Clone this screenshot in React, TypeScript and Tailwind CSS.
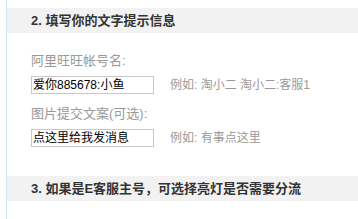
export default function App() {
  const font = { fontFamily: '"Liberation Sans", "Noto Sans CJK SC", sans-serif' }
  return (
    <div className="w-[358px] h-[219px] bg-white overflow-hidden" style={font}>
      <div className="ml-[6px] h-full border-l border-[#d4e3fb] pt-[8px]">
        <div className="h-[25px] bg-[#f2f2f2] pl-[24px] flex items-center text-[13px] font-bold text-[#333]">
          2. 填写你的文字提示信息
        </div>
        <div className="pl-[24px] pt-[18px] text-[13px] text-[#999]">
          <div className="h-[20px] leading-[20px]">阿里旺旺帐号名:</div>
          <div className="flex items-center mt-[5px] h-[18px]">
            <input
              readOnly
              value="爱你885678:小鱼"
              className="w-[123px] h-[18px] border border-[#c8c8c8] px-[1px] text-[12px] text-black outline-none"
              style={font}
            />
            <span className="ml-[16px] text-[12px]">例如: 淘小二 淘小二:客服1</span>
          </div>
          <div className="h-[20px] leading-[20px] mt-[10px]">图片提交文案(可选):</div>
          <div className="flex items-center mt-[5px] h-[18px]">
            <input
              readOnly
              value="点这里给我发消息"
              className="w-[123px] h-[18px] border border-[#c8c8c8] px-[1px] text-[12px] text-black outline-none"
              style={font}
            />
            <span className="ml-[16px] text-[12px]">例如: 有事点这里</span>
          </div>
        </div>
        <div className="mt-[29px] h-[25px] bg-[#f2f2f2] pl-[24px] flex items-center text-[13px] font-bold text-[#333]">
          3. 如果是E客服主号，可选择亮灯是否需要分流
        </div>
      </div>
    </div>
  )
}
